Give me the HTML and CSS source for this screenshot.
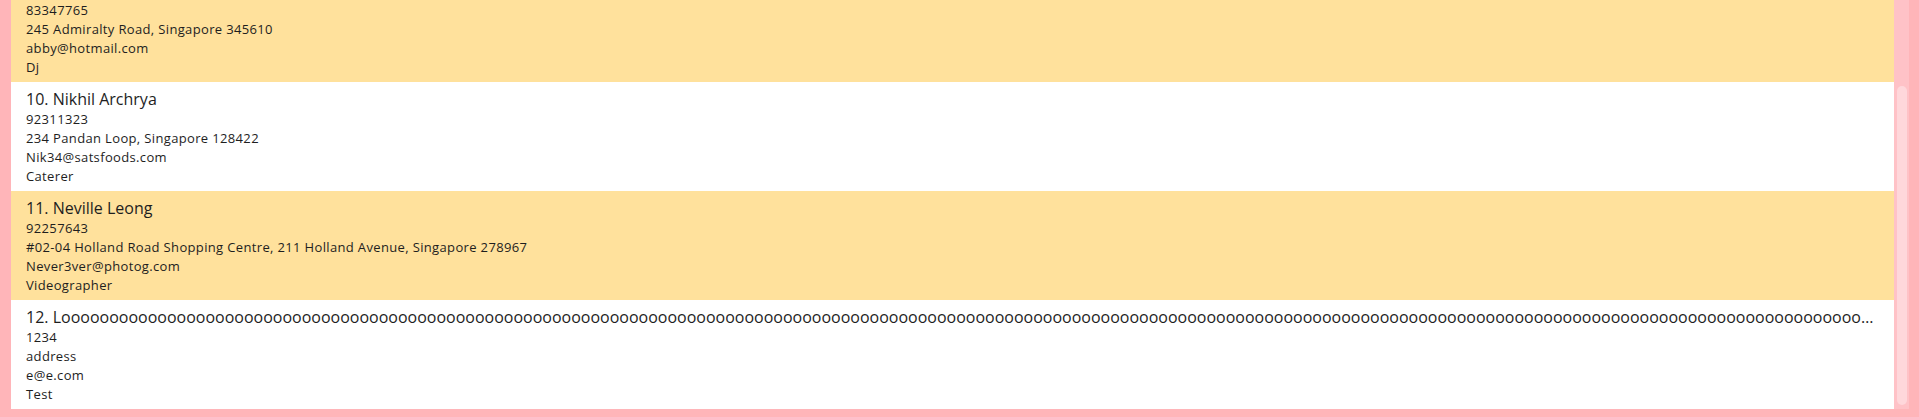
FILE: index.html
```html
<!DOCTYPE html>
<html lang="en">
<head>
<meta charset="utf-8">
<title>Contacts</title>
<link rel="stylesheet" href="styles.css">
</head>
<body>
<div class="frame">
  <div class="viewport">
    <div class="list">
      <div class="card card-odd">
        <div class="name">9. Abby Tan</div>
        <div class="detail">83347765</div>
        <div class="detail">245 Admiralty Road, Singapore 345610</div>
        <div class="detail">abby@hotmail.com</div>
        <div class="detail">Dj</div>
      </div>
      <div class="card card-even">
        <div class="name">10. Nikhil Archrya</div>
        <div class="detail">92311323</div>
        <div class="detail">234 Pandan Loop, Singapore 128422</div>
        <div class="detail">Nik34@satsfoods.com</div>
        <div class="detail">Caterer</div>
      </div>
      <div class="card card-odd">
        <div class="name">11. Neville Leong</div>
        <div class="detail">92257643</div>
        <div class="detail">#02-04 Holland Road Shopping Centre, 211 Holland Avenue, Singapore 278967</div>
        <div class="detail">Never3ver@photog.com</div>
        <div class="detail">Videographer</div>
      </div>
      <div class="card card-even">
        <div class="name">12. Looooooooooooooooooooooooooooooooooooooooooooooooooooooooooooooooooooooooooooooooooooooooooooooooooooooooooooooooooooooooooooooooooooooooooooooooooooooooooooooooooooooooooooooooooooooooooooooooooooooooooooooooooooooooooong Name</div>
        <div class="detail">1234</div>
        <div class="detail">address</div>
        <div class="detail">e@e.com</div>
        <div class="detail">Test</div>
      </div>
    </div>
  </div>
  <div class="scrollbar">
    <div class="thumb"></div>
  </div>
</div>
</body>
</html>
```

FILE: styles.css
```css
html, body {
  margin: 0;
  padding: 0;
}
body {
  background: #ffb5b9;
  font-family: "Open Sans", "Liberation Sans", sans-serif;
  color: #1e1e1e;
}
.frame {
  display: flex;
  height: 417px;
  box-sizing: border-box;
  padding: 0 10px 8px 11px;
}
.viewport {
  flex: 1;
  min-width: 0;
  display: flex;
  flex-direction: column;
  justify-content: flex-end;
  overflow: hidden;
  background: #ffffff;
}
.list {
  display: flex;
  flex-direction: column;
  flex-shrink: 0;
}
.card {
  padding: 6px 16px 5px 15px;
  height: 109px;
  box-sizing: border-box;
}
.card-odd {
  background: #ffe19c;
}
.card-even {
  background: #ffffff;
}
.name {
  font-size: 16px;
  line-height: 22px;
  white-space: nowrap;
  overflow: hidden;
  text-overflow: ellipsis;
}
.detail {
  font-size: 13px;
  letter-spacing: 0.35px;
  line-height: 19px;
  white-space: nowrap;
}
.scrollbar {
  width: 15px;
  flex-shrink: 0;
  background: #ffc2c7;
  display: flex;
  flex-direction: column;
  padding: 86px 2px 4px 3px;
  box-sizing: border-box;
}
.thumb {
  flex: 1;
  background: #ffd7db;
  border-radius: 5px;
}
```
